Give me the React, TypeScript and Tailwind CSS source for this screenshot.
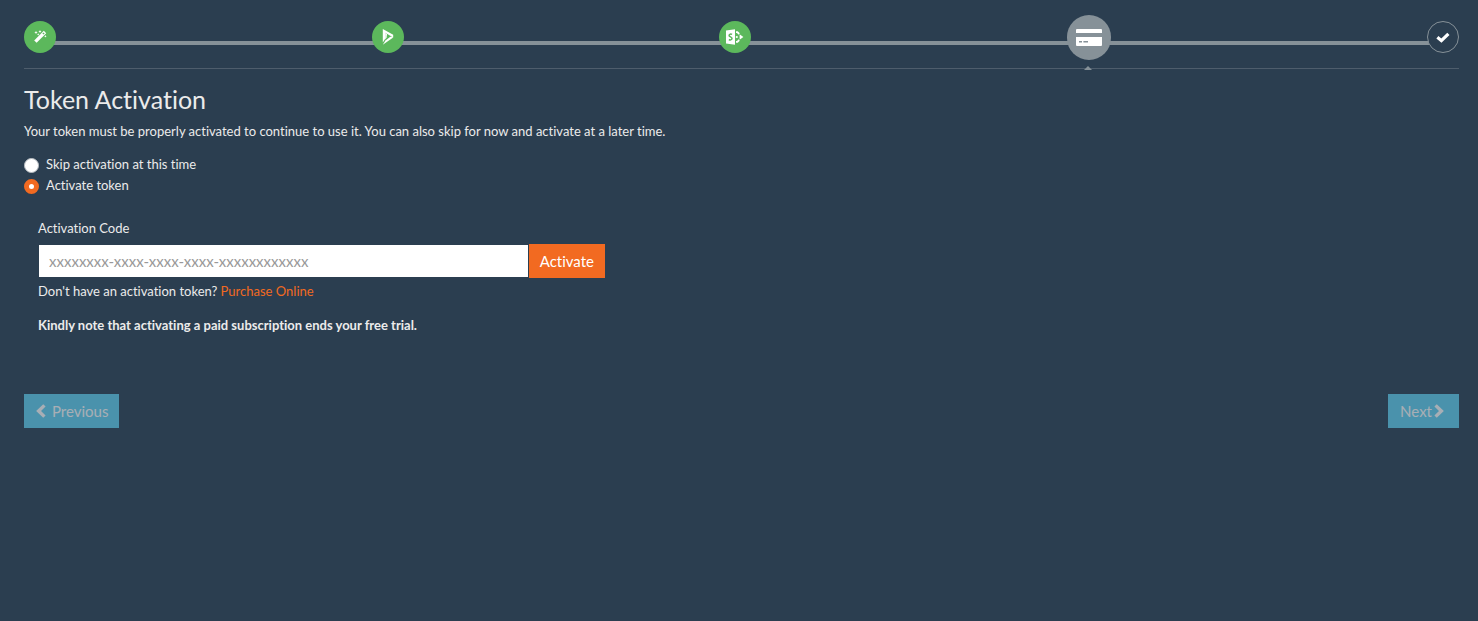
import { useState } from 'react';
import type { ReactNode } from 'react';

const WandIcon = () => (
    <svg viewBox="0 0 14 14" className="size-[14px]" fill="currentColor">
        <path d="M10.8 0.8 L13.2 3.2 L3.6 12.8 L1.2 10.4 Z" />
        <path d="M9.4 3.6 L10.6 2.4 L11.6 3.4 L10.4 4.6 Z" fill="#5cb85c" />
        <path d="M3 0.8 L3.5 2 L4.7 2.5 L3.5 3 L3 4.2 L2.5 3 L1.3 2.5 L2.5 2 Z" />
        <path d="M7 0 L7.5 1.1 L8.6 1.6 L7.5 2.1 L7 3.2 L6.5 2.1 L5.4 1.6 L6.5 1.1 Z" />
        <path d="M5.2 3.2 L5.6 4 L6.4 4.4 L5.6 4.8 L5.2 5.6 L4.8 4.8 L4 4.4 L4.8 4 Z" />
        <path d="M12.4 5 L12.8 5.9 L13.7 6.3 L12.8 6.7 L12.4 7.6 L12 6.7 L11.1 6.3 L12 5.9 Z" />
    </svg>
);

const DynamicsIcon = () => (
    <svg viewBox="0 0 12 16" className="w-3 h-4" fill="currentColor">
        <path d="M0.8 0 L11.2 5.8 V8.4 L3.2 3.8 V9.8 L0.8 13.6 Z" />
        <path d="M11.2 8.6 L0.8 15.8 L3.4 11.4 L8 8 L9.2 7.4 Z" />
        <path d="M3.2 3.8 L5 5 L4.6 8.6 L3.2 10.4 Z" />
    </svg>
);

const SharePointIcon = () => (
    <svg viewBox="0 0 18 16" className="w-[18px] h-4" fill="none">
        <path d="M0 1.4 L9 0.2 V15.8 L0 14.6 Z" fill="currentColor" />
        <path
            d="M6.1 5.4 C4.9 4.8 3.1 5 3.1 6.4 C3.1 8 6 7.8 6 9.6 C6 11.2 3.9 11.1 2.9 10.5"
            stroke="#5cb85c"
            strokeWidth="1.5"
        />
        <path d="M10 3.2 H11.4 L13.2 5 M10 12.8 H11.4 L13.2 11" stroke="currentColor" strokeWidth="1.8" />
        <circle cx="10.8" cy="8" r="1.1" fill="currentColor" />
        <path d="M13.6 5.2 L17.4 8 L13.6 10.8 Z" fill="currentColor" />
    </svg>
);

const CardIcon = () => (
    <svg viewBox="0 0 26 18" className="w-[26px] h-[18px]" fill="currentColor">
        <path d="M0 5 V2 Q0 1 1 1 H25 Q26 1 26 2 V5 Z" />
        <path d="M0 9 H26 V17 Q26 18 25 18 H1 Q0 18 0 17 Z" />
        <path d="M3 13 H6 V14.4 H3 Z M7.4 13 H12 V14.4 H7.4 Z" fill="#869198" />
    </svg>
);

const CheckIcon = () => (
    <svg viewBox="0 0 14 12" className="w-[14px] h-3" fill="none" stroke="currentColor" strokeWidth="3.2">
        <path d="M1.4 6.2 L5.4 9.6 L12.4 2.8" />
    </svg>
);

const ChevronIcon = ({ className = '' }: { className?: string }) => (
    <svg viewBox="0 0 10 14" className={'w-[10px] h-[14px] ' + className} fill="none" stroke="currentColor" strokeWidth="3.4">
        <path d="M8.4 1.4 L2.6 7 L8.4 12.6" />
    </svg>
);

type Step = { label: string; icon: ReactNode; state: 'done' | 'current' | 'last' };

const steps: Step[] = [
    { label: 'Start', icon: <WandIcon />, state: 'done' },
    { label: 'Dynamics', icon: <DynamicsIcon />, state: 'done' },
    { label: 'SharePoint', icon: <SharePointIcon />, state: 'done' },
    { label: 'Activation', icon: <CardIcon />, state: 'current' },
    { label: 'Finish', icon: <CheckIcon />, state: 'last' },
];

const circleStyles = {
    done: 'size-8 bg-[#5cb85c]',
    current: 'w-11 h-[45px] bg-[#869198]',
    last: 'size-8 bg-[#2b3e50] border border-[#869198]',
};

const Steps = () => (
    <nav className="relative flex items-center h-[54px] mt-[10px] border-b border-[#4e5d6c] box-content pb-1">
        <div className="absolute left-4 right-4 top-[31px] h-1 bg-[#869198]" />
        {steps.map((step) => (
            <div
                key={step.label}
                className={'relative flex ' + (step.state === 'last' ? 'w-[45px] justify-end' : 'flex-1')}
            >
                <button
                    type="button"
                    aria-label={step.label}
                    className={'relative flex items-center justify-center rounded-full text-white ' + circleStyles[step.state]}
                >
                    {step.icon}
                    {step.state === 'current' && (
                        <span className="absolute left-[17px] top-[51px] border-x-4 border-b-4 border-x-transparent border-b-[#869198]" />
                    )}
                </button>
            </div>
        ))}
    </nav>
);

const radioClass =
    'appearance-none size-[15px] mt-[3px] rounded-full bg-white border border-[#b9bec3] checked:border-[5px] checked:border-[#f26a21]';

const navButton = 'flex items-center h-[34px] pl-3 text-[15px] bg-[#5bc0de] text-[#ebebeb] opacity-65';

const App = () => {
    const [mode, setMode] = useState('activate');

    return (
        <div className="min-h-screen bg-[#2b3e50] pl-6 pr-[19px] pb-6 flow-root font-['Lato',sans-serif] [font-variant-ligatures:none] text-[13px] leading-5 text-[#ebebeb]">
            <Steps />
            <main>
                <h1 className="mt-[14px] text-[25px] leading-8">Token Activation</h1>
                <p className="mt-[6px]">
                    Your token must be properly activated to continue to use it. You can also skip for now and activate at a later time.
                </p>
                <div className="mt-3">
                    <label className="flex items-center gap-[7px] h-[21px]">
                        <input
                            type="radio"
                            name="mode"
                            className={radioClass}
                            checked={mode === 'skip'}
                            onChange={() => setMode('skip')}
                        />
                        Skip activation at this time
                    </label>
                    <label className="flex items-center gap-[7px] h-[21px]">
                        <input
                            type="radio"
                            name="mode"
                            className={radioClass}
                            checked={mode === 'activate'}
                            onChange={() => setMode('activate')}
                        />
                        Activate token
                    </label>
                </div>
                <section className="mt-[23px] ml-[14px]">
                    <label htmlFor="code">Activation Code</label>
                    <div className="flex items-center mt-[6px] max-w-[567px]">
                        <input
                            id="code"
                            type="text"
                            placeholder="xxxxxxxx-xxxx-xxxx-xxxx-xxxxxxxxxxxx"
                            className="flex-1 min-w-0 h-8 ml-px mr-px px-[10px] bg-white text-[15px] text-[#2b3e50] placeholder:text-[#999999]"
                        />
                        <button type="button" className="h-[34px] px-[11px] bg-[#f26a21] text-[15px] text-white">
                            Activate
                        </button>
                    </div>
                    <p className="mt-[3px]">
                        Don't have an activation token? <a href="#" className="text-[#f26a21]">Purchase Online</a>
                    </p>
                    <p className="mt-[14px] font-bold">Kindly note that activating a paid subscription ends your free trial.</p>
                </section>
                <div className="flex justify-between mt-[59px]">
                    <button type="button" disabled className={navButton + ' gap-[6px] pr-[11px]'}>
                        <ChevronIcon />
                        Previous
                    </button>
                    <button type="button" disabled className={navButton + ' gap-[2px] pr-[15px]'}>
                        Next
                        <ChevronIcon className="rotate-180" />
                    </button>
                </div>
            </main>
        </div>
    );
};

export default App;
